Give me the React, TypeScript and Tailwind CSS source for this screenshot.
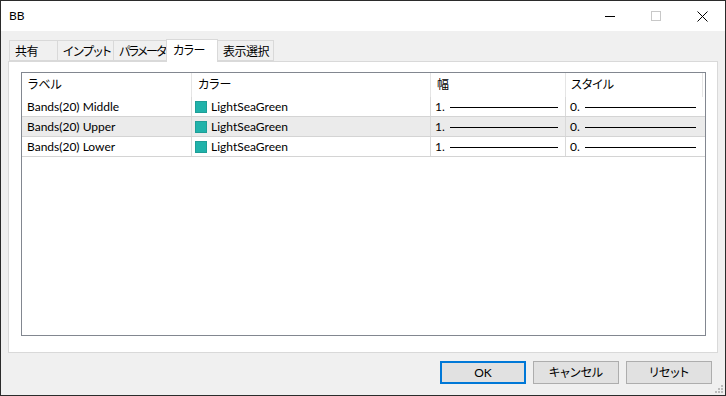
import React from "react";

const rows = [
    { label: "Bands(20) Middle", color: "LightSeaGreen", width: "1.", style: "0." },
    { label: "Bands(20) Upper", color: "LightSeaGreen", width: "1.", style: "0." },
    { label: "Bands(20) Lower", color: "LightSeaGreen", width: "1.", style: "0." },
];

const tabs = [
    { name: "共有", w: "w-[49px]", t: "tracking-[-0.5px]" },
    { name: "インプット", w: "w-[57px]", t: "tracking-[-0.5px]" },
    { name: "パラメータ", w: "w-[54px]", t: "tracking-[-1.6px]" },
    { name: "カラー", w: "w-[52px]", t: "tracking-[-0.5px]", active: true },
    { name: "表示選択", w: "w-[57px]", t: "tracking-[-0.5px]" },
];

const font = { fontFamily: 'Lato, "Noto Sans CJK JP", sans-serif' };

export default function App() {
    return (
        <div
            className="w-[726px] h-[396px] flex flex-col bg-[#f0f0f0] border border-[#2b2b2b] text-[12px] text-black overflow-hidden [font-feature-settings:'palt']"
            style={font}
        >
            {/* title bar */}
            <div className="h-[30px] bg-white flex items-center shrink-0">
                <span className="pl-[8px] flex-1 leading-none">BB</span>
                <div className="w-[46px] h-full flex items-center justify-center">
                    <svg width="10" height="10" viewBox="0 0 10 10">
                        <path d="M0 5.5h10" stroke="#000" strokeWidth="1" />
                    </svg>
                </div>
                <div className="w-[46px] h-full flex items-center justify-center">
                    <svg width="10" height="10" viewBox="0 0 10 10">
                        <rect x="0.5" y="0.5" width="9" height="9" fill="none" stroke="#c8c8c8" />
                    </svg>
                </div>
                <div className="w-[46px] h-full flex items-center justify-center">
                    <svg width="11" height="11" viewBox="0 0 11 11">
                        <path d="M0.5 0.5l10 10M10.5 0.5l-10 10" stroke="#000" strokeWidth="1" />
                    </svg>
                </div>
            </div>

            <div className="flex-1 flex flex-col px-[7px] pt-[8px] relative">
                {/* tabs */}
                <div className="flex items-end h-[22px] pl-[1px]">
                    {tabs.map((t, i) => (
                        <div
                            key={t.name}
                            className={
                                t.active
                                    ? `${t.w} ${t.t} h-[23px] -ml-px -mb-px relative z-10 bg-white border border-b-0 border-[#d9d9d9] pl-[6px] pt-[2px] whitespace-nowrap`
                                    : `${t.w} ${t.t} h-[21px] ${i === 0 ? "" : "-ml-px"} bg-[#f0f0f0] border border-[#d9d9d9] pl-[5px] pt-[2px] whitespace-nowrap`
                            }
                        >
                            {t.name}
                        </div>
                    ))}
                </div>

                {/* panel */}
                <div className="h-[292px] bg-white border border-[#d9d9d9] pt-[10px] pl-[12px] pr-[11px] pb-[16px] flex">
                    <div className="flex-1 border border-[#828790] bg-white flex flex-col">
                        <div className="grid grid-cols-[170px_239px_135px_137px] h-[24px] items-center">
                            <div className="pl-[6px] h-full flex items-center border-r border-[#e5e5e5]">ラベル</div>
                            <div className="pl-[6px] h-full flex items-center border-r border-[#e5e5e5]">カラー</div>
                            <div className="pl-[6px] h-full flex items-center border-r border-[#e5e5e5]">幅</div>
                            <div className="pl-[5px] h-full flex items-center border-r border-[#e5e5e5]">スタイル</div>
                        </div>
                        {rows.map((r, i) => (
                            <div
                                key={r.label}
                                className={`grid grid-cols-[170px_239px_135px_137px] h-[20px] border-b border-[#d4d4d4] ${
                                    i === 1 ? "bg-[#ebebeb]" : "bg-white"
                                }`}
                            >
                                <div className="pl-[5px] pt-px flex items-center border-r border-[#d9d9d9] whitespace-nowrap">
                                    {r.label}
                                </div>
                                <div className="pl-[3px] flex items-center border-r border-[#d9d9d9]">
                                    <span className="w-[12px] h-[12px] bg-[#20b2aa] border border-[#1e9e97] mr-[4px] mt-px" />
                                    <span className="pt-px">{r.color}</span>
                                </div>
                                <div className="pl-[4px] pr-[7px] flex items-center border-r border-[#d9d9d9]">
                                    <span className="pt-px">{r.width}</span>
                                    <span className="flex-1 h-px bg-black ml-[5px] mt-px" />
                                </div>
                                <div className="pl-[4px] pr-[7px] flex items-center">
                                    <span className="pt-px">{r.style}</span>
                                    <span className="flex-1 h-px bg-black ml-[5px] mt-px" />
                                </div>
                            </div>
                        ))}
                    </div>
                </div>

                {/* buttons */}
                <div className="flex justify-end gap-[7px] mt-[8px] pr-[6px]">
                    <button className="w-[86px] h-[23px] bg-[#e1e1e1] border-2 border-[#0078d7] flex items-center justify-center">
                        OK
                    </button>
                    <button className="w-[86px] h-[23px] bg-[#e1e1e1] border border-[#adadad] flex items-center justify-center">
                        キャンセル
                    </button>
                    <button className="w-[86px] h-[23px] bg-[#e1e1e1] border border-[#adadad] flex items-center justify-center">
                        リセット
                    </button>
                </div>

                {/* resize grip */}
                <svg className="absolute right-[1px] bottom-[1px]" width="10" height="10" viewBox="0 0 10 10">
                    <rect x="7" y="1" width="2" height="2" fill="#bcbcbc" />
                    <rect x="4" y="4" width="2" height="2" fill="#bcbcbc" />
                    <rect x="7" y="4" width="2" height="2" fill="#bcbcbc" />
                    <rect x="1" y="7" width="2" height="2" fill="#bcbcbc" />
                    <rect x="4" y="7" width="2" height="2" fill="#bcbcbc" />
                    <rect x="7" y="7" width="2" height="2" fill="#bcbcbc" />
                </svg>
            </div>
        </div>
    );
}
